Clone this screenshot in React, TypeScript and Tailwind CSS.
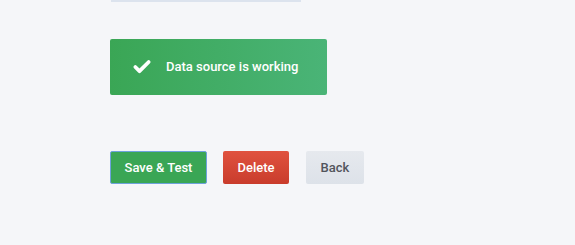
import { Check } from "lucide-react";

export default function App() {
    return (
        <div className="w-[575px] h-[245px] bg-[#f5f6f9] font-['Roboto',sans-serif] overflow-hidden">
            <div className="pl-[110px]">
                {/* tail of the input above */}
                <div className="ml-[1px] w-[190px] h-[2px] bg-[#dce3ee]" />

                {/* Status alert */}
                <div className="mt-[37px] w-[217px] h-[56px] rounded-[2px] bg-gradient-to-r from-[#3aa655] to-[#4ab477] flex items-center pl-[22px] text-white">
                    <Check className="w-[20px] h-[20px]" strokeWidth={4.5} />
                    <span className="ml-[14px] text-[13px] font-medium">Data source is working</span>
                </div>

                {/* Actions */}
                <div className="mt-[56px] flex items-center">
                    <button className="h-[33px] w-[97px] rounded-[2px] border border-[#6ea2dc] bg-[#3aa655] text-white text-[13px] font-medium">
                        Save &amp; Test
                    </button>
                    <button className="ml-4 h-[33px] w-[66px] rounded-[2px] bg-gradient-to-b from-[#e0523f] to-[#c93c2c] text-white text-[13px] font-medium">
                        Delete
                    </button>
                    <button className="ml-[17px] h-[33px] w-[58px] rounded-[2px] bg-gradient-to-b from-[#e6e9ee] to-[#dde2e9] text-[#52545c] text-[13px] font-medium">
                        Back
                    </button>
                </div>
            </div>
        </div>
    );
}
